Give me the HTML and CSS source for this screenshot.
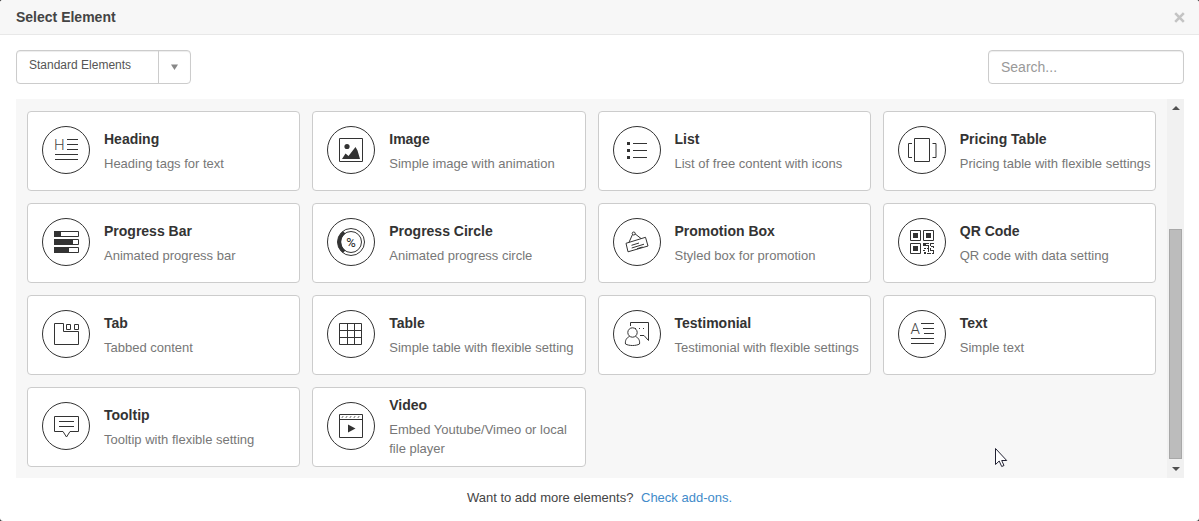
FILE: index.html
```html
<!DOCTYPE html>
<html lang="en">
<head>
<meta charset="utf-8">
<meta name="viewport" content="width=device-width, initial-scale=1">
<title>Select Element</title>
<link rel="stylesheet" href="styles.css">
</head>
<body>
<main class="dialog">
  <header class="dialog-header">
    <h1 class="dialog-title">Select Element</h1>
    <button class="close" type="button" aria-label="Close"><svg width="11" height="11" viewBox="0 0 11 11"><path d="M1.200 1.200l8.600 8.600M9.800 1.200L1.200 9.800"/></svg></button>
  </header>
  <div class="toolbar">
    <div class="picker">
      <select class="picker-select" aria-label="Element group"><option>Standard Elements</option></select>
      <span class="picker-arrow"><svg width="7" height="6" viewBox="0 0 7 6"><path d="M0 0.500h7L3.500 6z"/></svg></span>
    </div>
    <input class="search" type="text" placeholder="Search..." aria-label="Search">
  </div>
  <section class="panel">
    <div class="cards">
      <button class="card" type="button">
        <svg class="icon" viewBox="0 0 48 48"><circle cx="24" cy="24" r="23.5"/><text class="glyph" x="12" y="24" font-size="15">H</text><path d="M25 13.500h11M25 18.500h11M25 23.500h11M13 28.500h23M13 33.500h23"/></svg>
        <span class="info"><span class="name">Heading</span><span class="desc">Heading tags for text</span></span>
      </button>
      <button class="card" type="button">
        <svg class="icon" viewBox="0 0 48 48"><circle cx="24" cy="24" r="23.5"/><path d="M12.500 12.500h23v23h-23z"/><circle class="fill" cx="20" cy="20.500" r="2.600"/><path class="fill" d="M15 33l3.500-5.500 3 2.500 7-9 2 3.500 2.500 8.500z"/></svg>
        <span class="info"><span class="name">Image</span><span class="desc">Simple image with animation</span></span>
      </button>
      <button class="card" type="button">
        <svg class="icon" viewBox="0 0 48 48"><circle cx="24" cy="24" r="23.5"/><path class="fill" d="M14 16h3v3h-3zM14 23h3v3h-3zM14 30h3v3h-3z"/><path d="M20 17.500h14M20 24.500h14M20 31.500h14"/></svg>
        <span class="info"><span class="name">List</span><span class="desc">List of free content with icons</span></span>
      </button>
      <button class="card" type="button">
        <svg class="icon" viewBox="0 0 48 48"><circle cx="24" cy="24" r="23.5"/><path d="M16.500 12.500h15v23h-15zM14 17.500h-3.500v14h3.500M34.500 17.500h3.500v14h-3.500"/></svg>
        <span class="info"><span class="name">Pricing Table</span><span class="desc">Pricing table with flexible settings</span></span>
      </button>
      <button class="card" type="button">
        <svg class="icon" viewBox="0 0 48 48"><circle cx="24" cy="24" r="23.5"/><path d="M12.500 13.500h24v5h-24zM12.500 21.500h24v5h-24zM12.500 29.500h24v5h-24z"/><path class="fill" d="M12 13h7v6h-7zM12 21h19v6h-19zM12 29h15v6h-15z"/></svg>
        <span class="info"><span class="name">Progress Bar</span><span class="desc">Animated progress bar</span></span>
      </button>
      <button class="card" type="button">
        <svg class="icon" viewBox="0 0 48 48"><circle cx="24" cy="24" r="23.5"/><circle cx="24" cy="24" r="13.500"/><circle cx="24" cy="24" r="10.500"/><path class="fill" d="M16 13.200A13.500 13.500 0 0 0 16 34.800L18.500 32.500A10.500 10.500 0 0 1 18.500 15.500z"/><text class="glyph percent" x="24" y="28.500" font-size="13" text-anchor="middle">%</text></svg>
        <span class="info"><span class="name">Progress Circle</span><span class="desc">Animated progress circle</span></span>
      </button>
      <button class="card" type="button">
        <svg class="icon" viewBox="0 0 48 48"><circle cx="24" cy="24" r="23.5"/><path d="M13 25.300L32.500 19.300 35 28 15 33.800zM16 24.300L19.500 16.500M28 20.500L22 15.800M18.500 27.300L26 25M18.700 30L31 26.200M24 30.700L29.500 29"/><circle cx="20.700" cy="15.500" r="1.500"/></svg>
        <span class="info"><span class="name">Promotion Box</span><span class="desc">Styled box for promotion</span></span>
      </button>
      <button class="card" type="button">
        <svg class="icon" viewBox="0 0 48 48"><circle cx="24" cy="24" r="23.5"/><path d="M12.500 12.500h10v10h-10zM25.500 12.500h10v10h-10zM12.500 25.500h10v10h-10z"/><path class="fill" d="M15 15h5v5h-5zM28 15h5v5h-5zM15 28h5v5h-5zM25 25h6v1h-3v2h-3zM32 25h4v1h-3v2h-1zM28 27h3v3h-1v-2h-2zM33 28h3v2h-1v-1h-2zM26 30h2v1h-2zM29 30h2v4h-1v-3h-1zM32 30h1v2h3v3h-1v-2h-3zM25 32h2v1h-2zM26 34h2v2h-2zM29 35h4v1h-4zM34 35h2v1h-2z"/></svg>
        <span class="info"><span class="name">QR Code</span><span class="desc">QR code with data setting</span></span>
      </button>
      <button class="card" type="button">
        <svg class="icon" viewBox="0 0 48 48"><circle cx="24" cy="24" r="23.5"/><path d="M12.500 13.500h9v8h15v13h-24zM24.500 14.500h4v5h-4zM32.500 14.500h4v5h-4z"/></svg>
        <span class="info"><span class="name">Tab</span><span class="desc">Tabbed content</span></span>
      </button>
      <button class="card" type="button">
        <svg class="icon" viewBox="0 0 48 48"><circle cx="24" cy="24" r="23.5"/><path d="M12.500 13.500h22v21h-22zM12.500 20.500h22M12.500 27.500h22M20.500 13.500v21M27.500 13.500v21"/></svg>
        <span class="info"><span class="name">Table</span><span class="desc">Simple table with flexible setting</span></span>
      </button>
      <button class="card" type="button">
        <svg class="icon" viewBox="0 0 48 48"><circle cx="24" cy="24" r="23.5"/><path d="M17.500 16v-3.500h18v18L31 25.500h-4M16.500 26.500C13 28 12 31 12.500 34 16 36 23 36 26.500 34 27 31 26 28 22.500 26.500"/><circle cx="19.500" cy="22.500" r="4.700"/><path class="fill" d="M22 18h1v1h-1zM26 18h1v1h-1zM30 18h1v1h-1z"/></svg>
        <span class="info"><span class="name">Testimonial</span><span class="desc">Testimonial with flexible settings</span></span>
      </button>
      <button class="card" type="button">
        <svg class="icon" viewBox="0 0 48 48"><circle cx="24" cy="24" r="23.5"/><text class="glyph" x="12.500" y="24" font-size="15">A</text><path d="M23 13.500h13M25 18.500h11M26 23.500h10M13 28.500h23M13 33.500h23"/></svg>
        <span class="info"><span class="name">Text</span><span class="desc">Simple text</span></span>
      </button>
      <button class="card" type="button">
        <svg class="icon" viewBox="0 0 48 48"><circle cx="24" cy="24" r="23.5"/><path d="M12.500 14.500h24v15h-8.500l-3.500 5.500-3.500-5.500h-8.500zM17 19.500h15M17 24.500h15"/></svg>
        <span class="info"><span class="name">Tooltip</span><span class="desc">Tooltip with flexible setting</span></span>
      </button>
      <button class="card" type="button">
        <svg class="icon" viewBox="0 0 48 48"><circle cx="24" cy="24" r="23.5"/><path d="M12.500 12.500h23v23h-23zM12.500 17.500h23M15 15.700l1-1.400M19 15.700l1-1.400M23 15.700l1-1.400M27 15.700l1-1.400M31 15.700l1-1.400"/><path class="fill" d="M21 22.500l7.500 4-7.500 4z"/></svg>
        <span class="info"><span class="name">Video</span><span class="desc">Embed Youtube/Vimeo or local file player</span></span>
      </button>
    </div>
    <div class="scrollbar" aria-hidden="true">
      <svg class="scroll-arrow" viewBox="0 0 17 17"><path d="M5 11h8L9 7z"/></svg>
      <div class="track"><div class="thumb"></div></div>
      <svg class="scroll-arrow" viewBox="0 0 17 17"><path d="M5 6h8L9 10z"/></svg>
    </div>
    <svg class="cursor" width="13" height="20" viewBox="0 0 13 20" aria-hidden="true"><path d="M.5.500v16l3.700-3.500 2.500 5.500 2.300-1-2.300-5h5z"/></svg>
  </section>
  <footer class="dialog-footer">Want to add more elements? <a class="addons" href="#">Check add-ons.</a></footer>
</main>
</body>
</html>
```
FILE: styles.css
```css
* { box-sizing: border-box; }
body {
  margin: 0;
  background: #333;
  font-family: "Liberation Sans", Arial, sans-serif;
  font-size: 13px;
  line-height: 19px;
  color: #444;
}
.dialog {
  display: flex;
  flex-direction: column;
  min-height: 100vh;
  background: #fff;
  border-radius: 3px;
}
.dialog-header {
  display: flex;
  align-items: center;
  justify-content: space-between;
  height: 35px;
  padding: 0 14px 0 16px;
  background: #f7f7f7;
  border-bottom: 1px solid #e8e8e8;
  border-radius: 3px 3px 0 0;
}
.dialog-title {
  margin: 0;
  font-size: 14px;
  font-weight: bold;
}
.close {
  display: flex;
  padding: 0;
  border: 0;
  background: none;
}
.close path { stroke: #c4c4c4; stroke-width: 2.6; }
.toolbar {
  display: flex;
  justify-content: space-between;
  padding: 15px 15px 15px 16px;
}
.picker {
  display: grid;
  grid-template-columns: 141px 32px;
  height: 34px;
  border: 1px solid #ccc;
  border-radius: 4px;
  box-shadow: inset 0 1px 1px rgba(0, 0, 0, .075);
}
.picker-select {
  grid-area: 1 / 1 / 2 / 3;
  appearance: none;
  padding: 0 12px 4px;
  border: 0;
  background: none;
  font: inherit;
  font-size: 12px;
  color: #555;
}
.picker-arrow {
  grid-area: 1 / 2;
  display: flex;
  align-items: center;
  justify-content: center;
  border-left: 1px solid #ccc;
  pointer-events: none;
}
.picker-arrow path { fill: #888; }
.search {
  width: 196px;
  height: 34px;
  padding: 0 12px;
  border: 1px solid #ccc;
  border-radius: 4px;
  box-shadow: inset 0 1px 1px rgba(0, 0, 0, .075);
  font: inherit;
  font-size: 14px;
}
.search::placeholder { color: #999; }
.panel {
  position: relative;
  display: flex;
  margin: 0 15px 0 16px;
  background: #f7f7f7;
}
.cards {
  flex: 1;
  display: grid;
  grid-template-columns: repeat(4, 1fr);
  grid-auto-rows: 80px;
  gap: 12px;
  padding: 12px 11px 11px;
}
.card {
  display: flex;
  align-items: center;
  gap: 14px;
  padding: 0 3px 2px 14px;
  border: 1px solid #ccc;
  border-radius: 4px;
  background: #fff;
  font: inherit;
  text-align: left;
}
.icon {
  flex: none;
  width: 48px;
  height: 48px;
  fill: none;
  stroke: #333;
}
.icon .fill { fill: #333; stroke: none; }
.glyph {
  fill: #444;
  stroke: none;
  font-family: Roboto, sans-serif;
  font-weight: 300;
}
.percent { fill: #222; font-weight: 400; }
.info {
  display: flex;
  flex-direction: column;
  gap: 5px;
  padding-top: 2px;
}
.name {
  font-size: 14px;
  font-weight: bold;
  color: #333;
}
.desc { color: #777; }
.scrollbar {
  display: flex;
  flex-direction: column;
  width: 17px;
  background: #f1f1f1;
}
.scroll-arrow {
  width: 17px;
  height: 17px;
  fill: #505050;
}
.track {
  flex: 1;
  display: flex;
  flex-direction: column;
  justify-content: flex-end;
  padding: 0 2px 2px;
}
.thumb {
  height: 67%;
  border: 1px solid #a8a8a8;
  background: #bcbcbc;
}
.cursor {
  position: absolute;
  right: 176px;
  bottom: 10px;
  fill: #fff;
  stroke: #223;
}
.dialog-footer {
  padding: 10px 0;
  text-align: center;
}
.addons {
  margin-left: 4px;
  color: #428bca;
  text-decoration: none;
}
```
